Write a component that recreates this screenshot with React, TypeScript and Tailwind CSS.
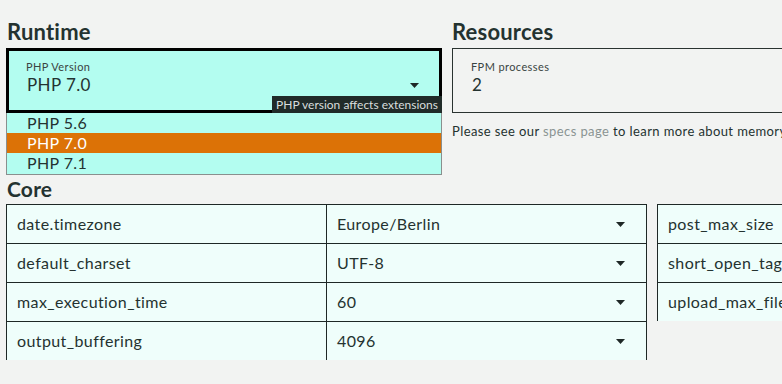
import { useState } from "react"

const font = { fontFamily: "Lato, 'Open Sans', sans-serif" }

const versions = ["PHP 5.6", "PHP 7.0", "PHP 7.1"]

const coreLeft = [
  ["date.timezone", "Europe/Berlin"],
  ["default_charset", "UTF-8"],
  ["max_execution_time", "60"],
  ["output_buffering", "4096"],
]

const coreRight = ["post_max_size", "short_open_tag", "upload_max_filesize"]

function Caret() {
  return (
    <svg width="9" height="5" viewBox="0 0 9 5" className="shrink-0">
      <path d="M0 0h9L4.5 5z" fill="#1e2826" />
    </svg>
  )
}

export default function App() {
  const [selected, setSelected] = useState("PHP 7.0")

  return (
    <div
      className="w-[782px] h-[384px] overflow-hidden bg-[#f2f3f2] text-[#243230] pl-[6px] tracking-[0.4px]"
      style={font}
    >
      <div className="flex gap-[10px] w-[1000px]">
        {/* Runtime */}
        <div className="w-[436px] shrink-0">
          <h2 className="pt-[18px] h-[45px] leading-[27px] text-[22px] font-bold pl-[1px] tracking-[0.2px]">Runtime</h2>
          <div className="relative mt-[3px] h-[65px] border-[3px] border-black bg-[#b3fdf0] pl-[17px] pr-[20px]">
            <div className="pt-[9px] text-[11px] leading-[14px] text-[#3a4442]">PHP Version</div>
            <div className="flex items-center justify-between">
              <span className="text-[17px] leading-[22px] pl-[1px]">{selected}</span>
              <Caret />
            </div>
            <div className="absolute right-[-3px] bottom-[-3px] h-[17px] px-[4px] bg-[#202b29] text-[#d8dedd] text-[12px] leading-[17px] tracking-[0px]">
              PHP version affects extensions
            </div>
          </div>
          <div className="border border-t-0 border-[#8a8f8e] bg-[#b3fdf0] pb-[1px]">
            {versions.map(v => (
              <div
                key={v}
                onClick={() => setSelected(v)}
                className={
                  v === selected
                    ? "h-[20px] leading-[20px] pl-[20px] text-[16px] bg-[#dc7206] text-white"
                    : "h-[20px] leading-[20px] pl-[20px] text-[16px]"
                }
              >
                {v}
              </div>
            ))}
          </div>
        </div>

        {/* Resources */}
        <div className="w-[436px] shrink-0">
          <h2 className="pt-[18px] h-[45px] leading-[27px] text-[22px] font-bold tracking-[0.2px]">Resources</h2>
          <div className="mt-[3px] h-[65px] border border-[#2a3330] pl-[18px]">
            <div className="pt-[11px] text-[11px] leading-[14px] text-[#3a4442]">FPM processes</div>
            <div className="text-[17px] leading-[22px] pl-[1px]">2</div>
          </div>
          <p className="mt-[9px] text-[13px] leading-[18px] whitespace-nowrap">
            Please see our <span className="text-[#8a9392]">specs page</span> to learn more about memory limits
          </p>
        </div>
      </div>

      {/* Core */}
      <h2 className="mt-[1px] h-[28px] leading-[25px] text-[21px] font-bold pl-[1px] tracking-[0.2px]">Core</h2>
      <div className="flex gap-[10px] items-start w-[1000px]">
        <div className="w-[641px] shrink-0 border-x border-[#1e2826] bg-[#effefb]">
          {coreLeft.map(([k, v]) => (
            <div key={k} className="flex h-[39px] border-t border-[#1e2826] text-[16px]">
              <div className="w-[320px] pl-[10px] flex items-center border-r border-[#1e2826]">{k}</div>
              <div className="flex-1 pl-[10px] pr-[21px] flex items-center justify-between">
                <span>{v}</span>
                <Caret />
              </div>
            </div>
          ))}
        </div>
        <div className="w-[320px] shrink-0 border-x border-[#1e2826] bg-[#effefb]">
          {coreRight.map(k => (
            <div key={k} className="flex h-[39px] border-t border-[#1e2826] text-[16px] items-center pl-[10px]">
              {k}
            </div>
          ))}
        </div>
      </div>
    </div>
  )
}
